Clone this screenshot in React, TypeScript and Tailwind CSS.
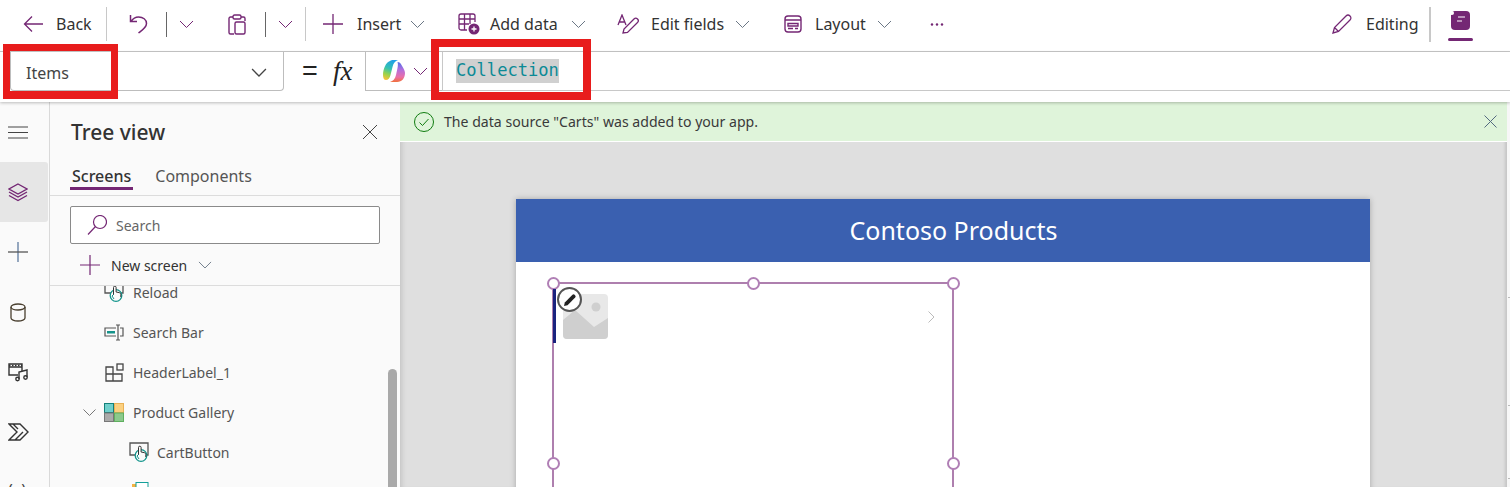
import React from "react";

const P = "#742774";
const Chev = ({ c = "#6b7785", s = 15, w = 1 }: { c?: string; s?: number; w?: number }) => (
  <svg width={s} height={s * 0.6} viewBox="0 0 15 9" fill="none" stroke={c} strokeWidth={w} className="shrink-0"><path d="M1 1l6.500 6.500L14 1" /></svg>
);

function Toolbar() {
  return (
    <div className="flex items-center h-[52px] pb-[3px] border-b border-[#c9c9c9] text-[16px] text-[#333] bg-white whitespace-nowrap">
      <svg width="21" height="18" viewBox="0 0 21 18" fill="none" stroke={P} strokeWidth="1.300" className="ml-[23px]"><path d="M20 9H1.500M9 1.500L1.500 9 9 16.500" /></svg>
      <span className="ml-[12px] w-[36px]">Back</span>
      <div className="w-px h-[34px] bg-[#c8c8c8] ml-[14px]" />
      <svg width="19" height="20" viewBox="0 0 19 20" fill="none" stroke={P} strokeWidth="1.500" className="ml-[22px]"><path d="M1.500 1v6.500H8M2 7.500C4 4.500 6.500 3 9.500 3c4.500 0 8 2.500 8 6.500 0 4-4 6.500-8 9.500" /></svg>
      <div className="w-px h-[25px] bg-[#666] ml-[18px]" />
      <div className="ml-[12px]"><Chev c={P} /></div>
      <svg width="18" height="21" viewBox="0 0 18 21" fill="none" stroke={P} strokeWidth="1.400" className="ml-[34px]"><path d="M5 3H2.500A1.500 1.500 0 0 0 1 4.500v14A1.500 1.500 0 0 0 2.500 20H6M13 3h2.500A1.500 1.500 0 0 1 17 4.500V7" /><rect x="5" y="1" width="8" height="4" rx="1.500" /><rect x="7" y="8" width="10" height="12" rx="1.500" /></svg>
      <div className="w-px h-[25px] bg-[#666] ml-[19px]" />
      <div className="ml-[12px]"><Chev c={P} /></div>
      <div className="w-px h-[34px] bg-[#c8c8c8] ml-[12px]" />
      <svg width="20" height="20" viewBox="0 0 20 20" fill="none" stroke={P} strokeWidth="1.300" className="ml-[17px]"><path d="M10 0v20M0 10h20" /></svg>
      <span className="ml-[14px] w-[43px]">Insert</span>
      <div className="ml-[10px]"><Chev /></div>
      <svg width="22" height="22" viewBox="0 0 22 22" fill="none" stroke={P} strokeWidth="1.300" className="ml-[33px]"><path d="M9 17H3a2 2 0 0 1-2-2V3a2 2 0 0 1 2-2h12a2 2 0 0 1 2 2v6M1 6h16M1 11h10M6.500 1v16M12 1v10" /><circle cx="16" cy="16" r="5.500" fill={P} stroke="none" /><path d="M16 13.500v5M13.500 16h5" stroke="#fff" /></svg>
      <span className="ml-[10px] w-[71px]">Add data</span>
      <div className="ml-[10px]"><Chev /></div>
      <svg width="22" height="21" viewBox="0 0 22 21" fill="none" stroke={P} strokeWidth="1.300" className="ml-[31px]"><path d="M1 11L5 1l4 10M2.500 8h5" /><path d="M6 19l1-4L17 5c1-1 2.500-1 3.500 0s1 2.500 0 3.500L10.500 18.500z" /></svg>
      <span className="ml-[12px] w-[75px]">Edit fields</span>
      <div className="ml-[9px]"><Chev /></div>
      <svg width="18" height="18" viewBox="0 0 18 18" fill="none" stroke={P} strokeWidth="1.400" className="ml-[34px]"><rect x="1" y="1" width="16" height="16" rx="3" /><path d="M1 5h16M4 8.500h10v2.500H4zM4 13.500h5M11 13.500h3" /></svg>
      <span className="ml-[13px] w-[53px]">Layout</span>
      <div className="ml-[9px]"><Chev /></div>
      <svg width="14" height="3" viewBox="0 0 14 3" fill={P} className="ml-[38px]"><circle cx="2" cy="1.500" r="1.200" /><circle cx="7" cy="1.500" r="1.200" /><circle cx="12" cy="1.500" r="1.200" /></svg>
      <svg width="20" height="20" viewBox="0 0 20 20" fill="none" stroke={P} strokeWidth="1.300" className="ml-auto"><path d="M1 19l1.500-5.500L14 2c1.200-1.200 2.800-1.200 4 0s1.200 2.800 0 4L6.500 17.500zM2.500 13.500l4 4" /></svg>
      <span className="ml-[14px] w-[53px]">Editing</span>
      <div className="w-[2px] h-[35px] bg-[#c8c8c8] ml-[10px]" />
      <div className="relative ml-[17px] mr-[37px] w-[25px] h-[32px] flex justify-center">
        <svg width="19" height="19" viewBox="0 0 19 19" className="mt-[3px]"><rect width="19" height="19" rx="4" fill={P} /><path d="M7 6h7M6 10h5" stroke="#fff" strokeWidth="1.200" /><circle cx="1" cy="2" r="2" fill="#fff" /></svg>
        <div className="absolute left-0 right-0 -bottom-[1px] h-[3px] rounded-full bg-[#742774]" />
      </div>
    </div>
  );
}

function Copilot() {
  return (
    <svg width="24" height="24" viewBox="0 0 24 24">
      <defs>
        <linearGradient id="a" x1="0.600" y1="0" x2="0.300" y2="1"><stop offset="0" stopColor="#1f9fe8" /><stop offset="0.450" stopColor="#35c2b0" /><stop offset="0.750" stopColor="#9ad24a" /><stop offset="1" stopColor="#f5c23a" /></linearGradient>
        <linearGradient id="b" x1="0.500" y1="0" x2="0.500" y2="1"><stop offset="0" stopColor="#4f6fe8" /><stop offset="0.400" stopColor="#b56fdc" /><stop offset="0.750" stopColor="#ea6fa8" /><stop offset="1" stopColor="#f0703a" /></linearGradient>
      </defs>
      <path d="M8 2C9 1 10 1 11 1h5c-3 1-4.500 3-5.500 7L8.500 16C8 19 6 21 4 21c-2 0-3-2-3-5C1 10 4 3 8 2z" fill="url(#a)" />
      <path d="M15.500 3c2 0 3 1 4 3 1.500 3 3.500 5 3.500 8 0 5-3 9-8 9H8c3-1 5-3 6-7l1.500-7c.5-2.500.500-4.500 0-6z" fill="url(#b)" />
    </svg>
  );
}

function FormulaBar() {
  return (
    <div className="relative z-10 flex h-[50px] bg-white shadow-[0_1px_3px_rgba(0,0,0,0.25)] pb-[11px]">
      <div className="ml-[10px] w-[274px] flex items-center justify-between border-x border-b border-[#bdbdbd] rounded-b-[4px] pl-[15px] pr-[16px] pt-[3px] text-[16px] text-[#444]">
        <span>Items</span>
        <Chev c="#444" s={16} w={1.200} />
      </div>
      <span className="ml-[18px] w-[15px] self-center font-['Liberation_Sans',sans-serif] text-[27px] leading-none text-[#222]">=</span>
      <span className="ml-[16px] w-[22px] self-center font-['Liberation_Serif',serif] italic text-[27px] leading-none text-[#222]">fx</span>
      <div className="ml-[10px] w-[77px] flex items-center border-l border-[#bdbdbd] border-b pl-[16px]">
        <Copilot />
        <div className="ml-[7px]"><Chev c={P} /></div>
      </div>
      <div className="flex-1 flex items-center border-l border-b border-[#c8c8c8] pl-[13px]">
        <span className="font-['DejaVu_Sans_Mono',monospace] text-[#0c8a96] text-[17.100px] leading-[23px] bg-[#d0d0d0] h-[24px]">Collection</span>
      </div>
    </div>
  );
}

const rail = [
  <svg key="l" width="20" height="20" viewBox="0 0 20 20" fill="none" stroke="#444" strokeWidth="1.200"><path d="M0 5h20M0 10.500h20M0 16h20" /></svg>,
  <svg key="s" width="20" height="20" viewBox="0 0 20 20" fill="none" stroke={P} strokeWidth="1.400"><path d="M10 2l9 5-9 5-9-5zM1 10l9 5 9-5M1 13.500l9 5 9-5" /></svg>,
  <svg key="p" width="20" height="20" viewBox="0 0 20 20" fill="none" strokeWidth="1.300"><path d="M10 0v20" stroke="#5f7ba0" /><path d="M0 10h20" stroke="#555" /></svg>,
  <svg key="d" width="20" height="20" viewBox="0 0 20 20" fill="none" stroke="#4a4030" strokeWidth="1.300"><path d="M3 5v11c0 1.600 3 3 7 3s7-1.400 7-3V5" /><ellipse cx="10" cy="5" rx="7" ry="3" /></svg>,
  <svg key="m" width="21" height="20" viewBox="0 0 21 20" fill="none" stroke="#333" strokeWidth="1.400"><path d="M10 13H1V2h13v7M1 5h13" /><path d="M1 3.500h13" strokeDasharray="1.500 1.500" /><path d="M11 17V10l8-2v7" /><circle cx="9.500" cy="17" r="1.700" /><circle cx="17.500" cy="15.500" r="1.700" /></svg>,
  <svg key="a" width="21" height="18" viewBox="0 0 21 18" fill="none" stroke="#333" strokeWidth="1.400"><path d="M1 1h11l8 8-8 8H1l8-8zM7 17l8-8M5 1l5 5" /></svg>,
];

function Rail() {
  return (
    <div className="w-[50px] shrink-0 border-r border-[#d9d9d9] bg-[#fafafa] flex flex-col">
      {rail.map((icon, i) => (
        <div key={i} className={`h-[60px] w-[48px] shrink-0 flex items-center pl-[8px] ${i === 1 ? "bg-[#e6e6e6] rounded-r-[3px]" : ""}`}>{icon}</div>
      ))}
      <div className="shrink-0 text-[16px] text-[#444] pl-[8px] pt-[20px] leading-none">(x)</div>
    </div>
  );
}

function ButtonIcon({ top = false }: { top?: boolean }) {
  return (
    <svg width="20" height="20" viewBox="0 0 20 20" fill="none" className="shrink-0">
      <path d={top ? "M1 0v11h18V0" : "M1 1h18v12H1z"} stroke="#555" strokeWidth="1.300" />
      <circle cx="12" cy="13.500" r="5.800" fill="#fafafa" stroke="#14958c" strokeWidth="1.300" />
      <path d="M9.500 13V5.500a1.300 1.300 0 0 1 2.600 0V10l3 .6c1 .2 1.700 1 1.700 2V15" fill="#fafafa" stroke="#333" strokeWidth="1" />
      <path d="M9.500 12.500L8 14l2 3" stroke="#14958c" strokeWidth="1" />
    </svg>
  );
}

function TreeRow({ icon, label, indent, gap, chev }: { icon: React.ReactNode; label?: string; indent: string; gap: string; chev?: boolean }) {
  return (
    <div className={`relative h-[40px] flex items-center text-[14px] text-[#555] ${indent}`}>
      {chev && <svg width="13" height="8" viewBox="0 0 13 8" fill="none" stroke="#777" className="absolute left-[33px] top-[17px]"><path d="M.5.500l6 6 6-6" /></svg>}
      <div className="w-[20px] flex items-center justify-center">{icon}</div>
      {label && <span className={gap}>{label}</span>}
    </div>
  );
}

function TreePanel() {
  return (
    <div className="w-[350px] shrink-0 bg-[#fafafa] relative overflow-hidden flex flex-col">
      <div className="flex items-center justify-between h-[58px] pt-[4px] pl-[21px] pr-[22px] shrink-0">
        <span className="text-[21px] font-medium text-[#333]">Tree view</span>
        <svg width="16" height="16" viewBox="0 0 16 16" fill="none" stroke="#444" strokeWidth="1" className="-mt-[3px]"><path d="M1 1l14 14M15 1L1 15" /></svg>
      </div>
      <div className="flex h-[36px] pl-[20px] border-b border-[#dcdcdc] text-[16px] shrink-0">
        <span className="px-[2px] h-[30px] pt-[4px] leading-[24px] text-[#333] font-medium border-b-[3px] border-[#742774]">Screens</span>
        <span className="ml-[22px] pt-[4px] leading-[24px] text-[#555]">Components</span>
      </div>
      <div className="ml-[20px] mt-[10px] w-[310px] h-[38px] shrink-0 bg-white border border-[#8a8a8a] rounded-[2px] flex items-center pl-[16px] text-[14px] text-[#666]">
        <svg width="20" height="20" viewBox="0 0 20 20" fill="none" stroke={P} strokeWidth="1.200"><circle cx="13" cy="7" r="6.500" /><path d="M8.500 11.500L1 19.500" /></svg>
        <span className="ml-[9px]">Search</span>
      </div>
      <div className="flex items-center h-[42px] pt-[1px] shrink-0 border-b border-[#dcdcdc] pl-[30px] text-[14px] text-[#333]">
        <svg width="20" height="20" viewBox="0 0 20 20" fill="none" stroke={P} strokeWidth="1.200"><path d="M10 0v20M0 10h20" /></svg>
        <span className="ml-[11px]">New screen</span>
        <div className="ml-[11px]"><Chev s={14} /></div>
      </div>
      <div className="flex-1 min-h-0 overflow-hidden">
        <div className="-mt-[14px]">
          <TreeRow indent="pl-[54px]" gap="ml-[9px]" label="Reload" icon={<ButtonIcon top />} />
          <TreeRow indent="pl-[54px]" gap="ml-[9px]" label="Search Bar" icon={
            <svg width="20" height="17" viewBox="0 0 20 17" fill="none" stroke="#555" strokeWidth="1.200"><path d="M12 4H1v8h11" /><rect x="3" y="7" width="8" height="2.500" fill="#16938b" stroke="none" /><path d="M14 1v15M12 1h4M12 16h4M16 4h3v8h-3" /></svg>} />
          <TreeRow indent="pl-[54px]" gap="ml-[9px]" label="HeaderLabel_1" icon={
            <svg width="19" height="19" viewBox="0 0 19 19" fill="none" stroke="#444" strokeWidth="1.300"><path d="M1 4h7v14H1zM1 11h16v7H8M8 11h9" /><rect x="12" y="1" width="6" height="6" /></svg>} />
          <TreeRow indent="pl-[54px]" gap="ml-[9px]" chev label="Product Gallery" icon={
            <svg width="20" height="19" viewBox="0 0 20 19"><rect x=".5" y=".5" width="9" height="9" fill="#6fcfcb" stroke="#14807a" /><rect x="10.500" y=".5" width="9" height="9" fill="#fbd080" stroke="#e8b055" /><rect x=".5" y="10" width="9" height="8.500" fill="#aaa" stroke="#777" /><rect x="10.500" y="10" width="9" height="8.500" fill="#8cc98c" stroke="#5faf5f" /></svg>} />
          <TreeRow indent="pl-[79px]" gap="ml-[8px]" label="CartButton" icon={<ButtonIcon />} />
          <TreeRow indent="pl-[79px]" gap="ml-[8px]" icon={
            <svg width="20" height="20" viewBox="0 0 20 20"><rect x="3" y="2" width="8" height="12" fill="#f5b342" /><rect x="7" y=".5" width="12" height="12" fill="#fff" stroke="#14a09a" /></svg>} />
        </div>
      </div>
      <div className="absolute left-[338px] top-[267px] w-[9px] h-[130px] rounded-full bg-[#a9a9a9]" />
    </div>
  );
}

const Handle = ({ pos }: { pos: string }) => <div className={`absolute w-[13px] h-[13px] rounded-full bg-white border-2 border-[#b07fb5] ${pos}`} />;

function Canvas() {
  return (
    <div className="flex-1 bg-[#dfdfdf] flex flex-col min-w-0 overflow-hidden border-r-[3px] border-[#f7f7f7] shadow-[inset_6px_0_5px_-4px_rgba(0,0,0,0.12),inset_-4px_0_3px_-2px_rgba(0,0,0,0.12)]">
      <div className="h-[40px] shrink-0 bg-[#dff4da] border-b border-white flex items-center pl-[14px] pr-[10px] text-[14.100px] text-[#3a3a3a]">
        <svg width="20" height="20" viewBox="0 0 20 20" fill="none" stroke="#107c10" strokeWidth="1"><circle cx="10" cy="10" r="9.500" /><path d="M5.500 10.500l3 3 6-6.500" /></svg>
        <span className="ml-[10px]">The data source "Carts" was added to your app.</span>
        <svg width="13" height="13" viewBox="0 0 13 13" fill="none" stroke="#546a80" className="ml-auto"><path d="M.5.500l12 12M12.500.500l-12 12" /></svg>
      </div>
      <div className="ml-[116px] mt-[57px] w-[854px] flex-1 bg-white shadow-[0_0_6px_rgba(0,0,0,0.25)]">
        <div className="h-[63px] bg-[#3a60b0] flex items-center justify-center pl-[21px] text-white text-[25px]">Contoso Products</div>
        <div className="relative ml-[36px] mt-[20px] w-[402px] h-[300px] border-2 border-[#ae7fae]">
          <Handle pos="-left-[7.500px] -top-[7.500px]" />
          <Handle pos="left-[192.500px] -top-[7.500px]" />
          <Handle pos="-right-[7.500px] -top-[7.500px]" />
          <Handle pos="-left-[7.500px] top-[172.500px]" />
          <Handle pos="-right-[7.500px] top-[172.500px]" />
          <div className="absolute -left-[1px] top-[5px] w-[3px] h-[54px] bg-[#1a237e]" />
          <svg width="45" height="45" viewBox="0 0 45 45" className="absolute left-[9px] top-[10px]"><rect width="45" height="45" rx="4" fill="#e8e8e8" /><circle cx="33" cy="13" r="4.500" fill="#cfcfcf" /><path d="M0 26l12-10 19 17 14-9v17a4 4 0 0 1-4 4H4a4 4 0 0 1-4-4z" fill="#cfcfcf" /></svg>
          <div className="absolute left-[3px] top-[3px] w-[25px] h-[25px] rounded-full bg-white border-2 border-[#555] flex items-center justify-center">
            <svg width="14" height="14" viewBox="0 0 14 14" fill="#222"><path d="M1 13l.8-3.500L9.500 1.800a1.500 1.500 0 0 1 2.100 0l.6.6a1.500 1.500 0 0 1 0 2.100L4.500 12.200z" /></svg>
          </div>
          <svg width="7" height="12" viewBox="0 0 7 12" fill="none" stroke="#bbb" className="absolute left-[374px] top-[27px]"><path d="M.5.500l5.500 5.500-5.500 5.500" /></svg>
        </div>
      </div>
    </div>
  );
}

const ticks = ["top-[297px]", "top-[405px]", "top-[478px]"];

export default function App() {
  return (
    <div className="relative w-[1510px] h-[487px] overflow-hidden bg-white font-['Noto_Sans',sans-serif]">
      <Toolbar />
      <FormulaBar />
      <div className="flex h-[385px]">
        <Rail />
        <TreePanel />
        <Canvas />
      </div>
      {ticks.map((t) => (
        <div key={t} className={`absolute left-[1508px] w-[2px] h-px bg-[#bbbbbb] ${t}`} />
      ))}
      <div className="absolute z-20 left-[3px] top-[44px] w-[115px] h-[55px] border-[7px] border-b-[8px] border-[#e81c1c]" />
      <div className="absolute z-20 left-[431px] top-[39px] w-[160px] h-[61px] border-[8px] border-[#e81c1c]" />
    </div>
  );
}
